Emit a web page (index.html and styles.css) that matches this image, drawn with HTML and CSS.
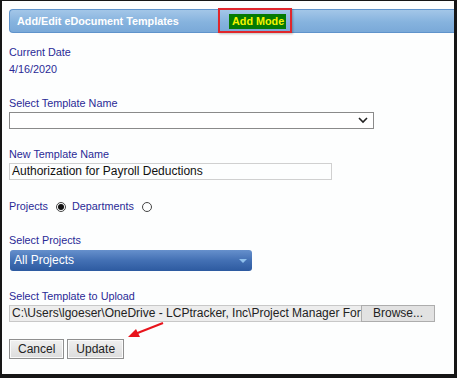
FILE: index.html
```html
<!DOCTYPE html>
<html lang="en">
<head>
  <meta charset="UTF-8" />
  <title>Add/Edit eDocument Templates</title>
  <link rel="stylesheet" href="styles.css">
</head>
<body>

<div class="frame">
  <div class="header">
    <span class="title">Add/Edit eDocument Templates</span>
    <span class="mode">Add Mode</span>
  </div>
  <div class="mode-mark"></div>

  <div class="label first">Current Date</div>
  <div class="label">4/16/2020</div>

  <div class="label gap">Select Template Name</div>
  <div class="select">
    <svg class="chevron" width="10" height="7" viewBox="0 0 10 7">
      <polyline points="1,1 5,5 9,1" fill="none" stroke="#222" stroke-width="1.6" />
    </svg>
  </div>

  <div class="label gap">New Template Name</div>
  <div class="text-input">Authorization for Payroll Deductions</div>

  <div class="radios">
    <span class="label">Projects</span>
    <span class="radio checked"></span>
    <span class="label">Departments</span>
    <span class="radio"></span>
  </div>

  <div class="label gap">Select Projects</div>
  <div class="blue-select">
    <span>All Projects</span>
    <span class="tri"></span>
  </div>

  <div class="label gap">Select Template to Upload</div>
  <div class="file-row">
    <div class="file-path">C:\Users\lgoeser\OneDrive - LCPtracker, Inc\Project Manager Forms</div>
    <div class="browse">Browse...</div>
  </div>

  <div class="buttons">
    <button class="btn">Cancel</button>
    <button class="btn">Update</button>
  </div>

  <svg class="arrow" width="40" height="20" viewBox="0 0 40 20">
    <line x1="37" y1="2" x2="9" y2="13" stroke="#e8141c" stroke-width="2" />
    <polygon points="2,16 10,8 14,16" fill="#e8141c" />
  </svg>
</div>

</body>
</html>
```

FILE: styles.css
```css
* {
  box-sizing: border-box;
}

body {
  margin: 0;
  font-family: 'Liberation Sans', Arial, sans-serif;
  background: #fff;
}

.frame {
  position: relative;
  width: 457px;
  height: 378px;
  border-left: 2px solid #161616;
  border-top: 1px solid #161616;
  border-right: 3px solid #161616;
  border-bottom: 4px solid #161616;
  padding: 8px 0 0 7px;
  background: #fdfefe;
}

.header {
  height: 24px;
  display: flex;
  align-items: center;
  padding-left: 7px;
  background: linear-gradient(#a3c6e8, #86b3de 55%, #7aa9d8);
  border: 1px solid #5f93cb;
  border-right: none;
  border-radius: 4px 0 0 4px;
}

.title {
  color: #fff;
  font-weight: bold;
  font-size: 10.8px;
  width: 212px;
}

.mode {
  background: #047a04;
  color: #f4f400;
  font-weight: bold;
  font-size: 10.8px;
  padding: 1px 2px 1px 3px;
  line-height: 13px;
}

.mode-mark {
  position: absolute;
  left: 216px;
  top: 7px;
  width: 74px;
  height: 25px;
  border: 2px solid #e0262b;
  box-shadow: 1px 1px 2px rgba(0, 0, 0, 0.25);
}

.label {
  color: #2a2a96;
  font-size: 10.8px;
  line-height: 17px;
}

.label.first {
  margin-top: 11px;
}

.label.gap {
  margin-top: 17px;
}

.select {
  position: relative;
  width: 365px;
  height: 17px;
  border: 1px solid #8a8a8a;
  background: #fff;
}

.chevron {
  position: absolute;
  right: 5px;
  top: 4px;
}

.text-input {
  width: 323px;
  height: 17px;
  border: 1px solid #d0d0d0;
  font-size: 12px;
  line-height: 15px;
  padding-left: 2px;
  color: #111;
}

.radios {
  display: flex;
  align-items: center;
  margin-top: 18px;
  height: 17px;
}

.radio {
  width: 10px;
  height: 10px;
  border: 1px solid #444;
  border-radius: 50%;
  margin: 0 6px 0 8px;
  display: flex;
  align-items: center;
  justify-content: center;
}

.radio.checked::after {
  content: "";
  width: 6px;
  height: 6px;
  border-radius: 50%;
  background: #111;
}

.blue-select {
  position: relative;
  width: 242px;
  height: 21px;
  margin-top: 1px;
  margin-left: 1px;
  border-radius: 3px;
  background: linear-gradient(#6690cc, #4370b4 50%, #2d5aa0);
  color: #fff;
  font-size: 12px;
  line-height: 21px;
  padding-left: 4px;
}

.tri {
  position: absolute;
  right: 5px;
  top: 9px;
  border-left: 4px solid transparent;
  border-right: 4px solid transparent;
  border-top: 4px solid #8fc0ec;
}

.file-row {
  display: flex;
  height: 17px;
}

.file-path {
  width: 352px;
  border: 1px solid #c8c8c8;
  border-right: none;
  background: #ededed;
  font-size: 12px;
  line-height: 15px;
  padding-left: 2px;
  white-space: nowrap;
  overflow: hidden;
  color: #222;
}

.browse {
  width: 74px;
  border: 1px solid #adadad;
  background: #e2e2e2;
  font-size: 12px;
  line-height: 15px;
  text-align: center;
  color: #222;
}

.buttons {
  display: flex;
  gap: 3px;
  margin-top: 17px;
}

.btn {
  height: 20px;
  padding: 0 8px;
  font-family: 'Liberation Sans', Arial, sans-serif;
  font-size: 12px;
  color: #222;
  background: linear-gradient(#f0f0f0, #dcdcdc);
  border: 1px solid #8f8f8f;
  border-radius: 0;
  box-shadow: inset 0 0 0 1px #fafafa;
}

.arrow {
  position: absolute;
  left: 124px;
  top: 320px;
}
```
